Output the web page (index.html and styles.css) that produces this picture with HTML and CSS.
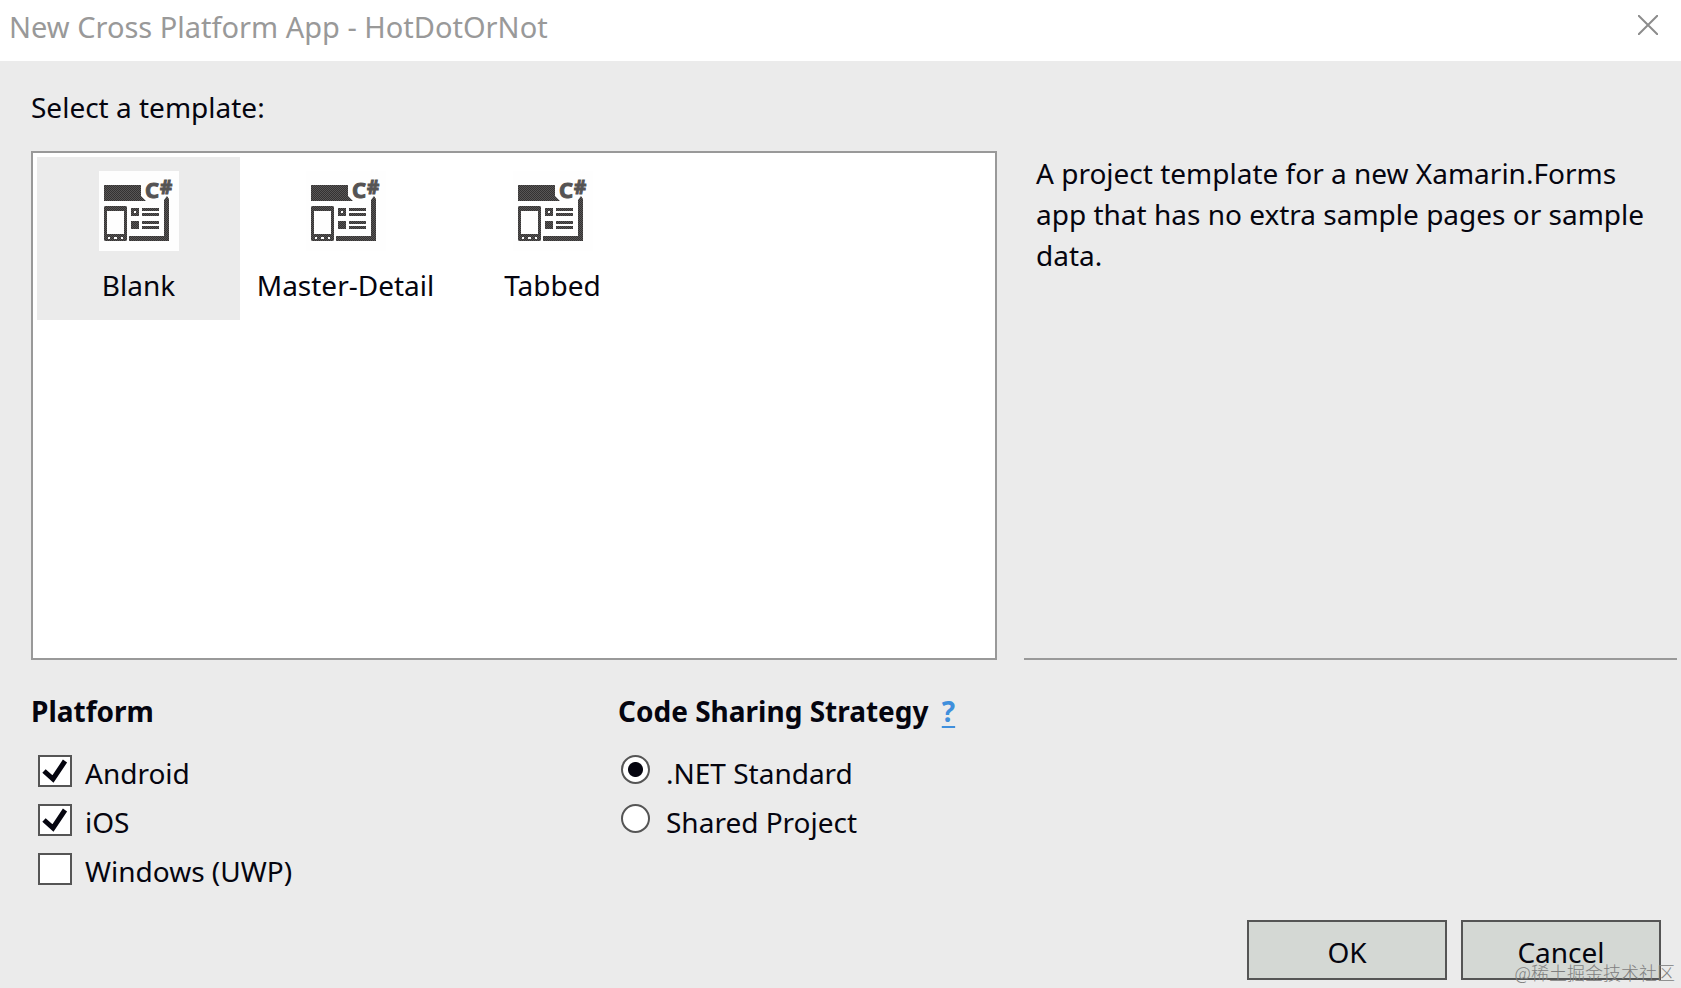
FILE: index.html
```html
<!DOCTYPE html>
<html lang="en">
<head>
<meta charset="utf-8">
<title>New Cross Platform App - HotDotOrNot</title>
<link rel="stylesheet" href="styles.css">
</head>
<body>
<svg class="sprite" aria-hidden="true">
  <defs>
    <pattern id="dither" width="2" height="2" patternUnits="userSpaceOnUse">
      <rect width="2" height="2" fill="#585656"/>
      <rect width="1" height="1" fill="#343232"/>
      <rect x="1" y="1" width="1" height="1" fill="#343232"/>
    </pattern>
    <symbol id="template" viewBox="0 0 80 80">
      <rect width="80" height="80" fill="#fefefe"/>
      <g fill="url(#dither)">
        <path d="M5 14H42V25L47 30H5Z"/>
        <path fill-rule="evenodd" d="M6 35H27L28 36V69L27 70H6L5 69V36ZM8 40V63H25V40ZM9 66V68H11V66ZM15 66V68H18V66ZM22 66V68H24V66Z"/>
        <path fill-rule="evenodd" d="M32 37H40V45H32ZM35 40V42H37V40Z"/>
        <path d="M32 50H40V58H32Z"/>
        <path d="M43 37H60V40H43ZM43 42H60V45H43ZM43 50H60V53H43ZM43 55H60V58H43Z"/>
        <path d="M30 65H65V29L68 25L70 28V70H30Z"/>
      </g>
      <g class="icon-text">
        <text class="icon-c" x="46" y="27">C</text>
        <text class="icon-sharp" x="61" y="23">#</text>
      </g>
    </symbol>
  </defs>
</svg>
<main class="dialog">
  <header class="titlebar">
    <h1 class="title">New Cross Platform App - HotDotOrNot</h1>
    <button class="close" type="button" aria-label="Close">
      <svg width="20" height="20" viewBox="0 0 20 20" aria-hidden="true"><path d="M0 0L20 20M20 0L0 20"/></svg>
    </button>
  </header>
  <form class="content">
    <p class="prompt" id="prompt">Select a template:</p>
    <div class="chooser">
      <div class="templates" role="group" aria-labelledby="prompt">
        <button class="template selected" type="button" aria-pressed="true"><svg class="thumb" aria-hidden="true"><use href="#template"/></svg>Blank</button>
        <button class="template" type="button" aria-pressed="false"><svg class="thumb" aria-hidden="true"><use href="#template"/></svg>Master-Detail</button>
        <button class="template" type="button" aria-pressed="false"><svg class="thumb" aria-hidden="true"><use href="#template"/></svg>Tabbed</button>
      </div>
      <p class="description">A project template for a new Xamarin.Forms app that has no extra sample pages or sample data.</p>
    </div>
    <div class="options">
      <section>
        <h2 class="heading">Platform</h2>
        <label class="option"><input class="check" type="checkbox" checked>Android</label>
        <label class="option"><input class="check" type="checkbox" checked>iOS</label>
        <label class="option"><input class="check" type="checkbox">Windows (UWP)</label>
      </section>
      <section>
        <h2 class="heading">Code Sharing Strategy <a class="help" href="#help">?</a></h2>
        <label class="option"><input class="radio" type="radio" name="strategy" checked>.NET Standard</label>
        <label class="option"><input class="radio" type="radio" name="strategy">Shared Project</label>
      </section>
    </div>
    <footer class="actions">
      <button class="action" type="submit">OK</button>
      <button class="action" type="button">Cancel</button>
    </footer>
  </form>
  <span class="watermark" lang="zh">@稀土掘金技术社区</span>
</main>
</body>
</html>
```
FILE: styles.css
```css
* { box-sizing: border-box; }

body {
  margin: 0;
  background: #ebebeb;
  color: #05050f;
  font: 28px/41px "Noto Sans", "Noto Sans CJK SC", sans-serif;
}

h1, h2, p { margin: 0; font-size: inherit; }
button { font: inherit; color: inherit; cursor: pointer; }

.sprite { position: absolute; width: 0; height: 0; }

.dialog {
  position: relative;
  display: flex;
  flex-direction: column;
  min-height: 100vh;
}

.titlebar {
  display: flex;
  justify-content: space-between;
  align-items: flex-start;
  height: 61px;
  padding: 6px 15px 0 9px;
  background: #fff;
}
.title { color: #999; font-size: 29px; font-weight: 400; }
.close {
  display: flex;
  padding: 9px 8px;
  border: 0;
  background: none;
}
.close path { stroke: #8c8c8c; stroke-width: 2; }

.content {
  display: flex;
  flex: 1;
  flex-direction: column;
  padding: 26px 20px 8px 31px;
}
.prompt { margin-bottom: 23px; }

.chooser {
  display: grid;
  grid-template-columns: 966fr 653fr;
  gap: 27px;
  min-height: 509px;
  margin-right: -16px;
}
.templates {
  display: flex;
  align-items: flex-start;
  gap: 4px;
  padding: 4px;
  border: 2px solid #999;
  background: #fff;
}
.template {
  display: flex;
  flex-direction: column;
  align-items: center;
  gap: 14px;
  width: 203px;
  padding: 14px 0;
  border: 0;
  background: none;
}
.template.selected { background: #ebebeb; }
.thumb { width: 80px; height: 80px; }
.icon-text {
  fill: #555353;
  stroke: #555353;
  font-family: "Noto Sans", sans-serif;
  font-weight: 700;
}
.icon-c { font-size: 22px; }
.icon-sharp { font-size: 19px; }

.description {
  padding: 2px 12px 0;
  border-bottom: 2px solid #999;
}

.options {
  display: grid;
  grid-template-columns: 587fr 1043fr;
  margin-top: 31px;
}
.heading { margin-bottom: 17px; font-weight: 700; }
.help {
  margin-left: 6px;
  color: #3f8fdc;
  text-decoration-thickness: 2px;
  text-underline-offset: 4px;
}

.option {
  display: flex;
  align-items: flex-start;
  width: fit-content;
  padding-top: 4px;
  margin-bottom: 4px;
}
.check, .radio {
  flex: none;
  appearance: none;
  border: 2px solid #555;
  background: #fff no-repeat center;
}
.check { width: 34px; height: 32px; margin: 2px 13px 0 7px; }
.check:checked {
  background-image: url("data:image/svg+xml,%3Csvg xmlns='http://www.w3.org/2000/svg' width='30' height='28'%3E%3Cpath d='M4 14L13 22L25 4' fill='none' stroke='%2305050f' stroke-width='5'/%3E%3C/svg%3E");
}
.radio { width: 29px; height: 29px; margin: 2px 16px 0 3px; border-radius: 50%; }
.radio:checked { background-image: radial-gradient(circle, #05050f 7px, #fff 8px); }

.actions {
  display: flex;
  justify-content: flex-end;
  gap: 14px;
  margin-top: auto;
}
.action {
  width: 200px;
  height: 60px;
  padding: 4px 0 0;
  border: 2px solid #555;
  background: #d4d8d4;
}

.watermark {
  position: absolute;
  right: 6px;
  bottom: 4px;
  color: #808080;
  font: 300 18px/24px "Noto Sans CJK SC", sans-serif;
  pointer-events: none;
}
```
